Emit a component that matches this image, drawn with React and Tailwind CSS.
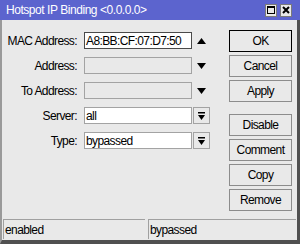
import React from 'react';

const font = { fontFamily: '"Liberation Sans", Arial, sans-serif' };

// small arrow drawings used beside the fields
const ArrowUp = () => (
  <svg width="9" height="6" viewBox="0 0 9 6"><path d="M0 6 L4.5 0 L9 6 Z" fill="#000" /></svg>
);

const ArrowDown = () => (
  <svg width="9" height="6" viewBox="0 0 9 6"><path d="M0 0 L9 0 L4.5 6 Z" fill="#000" /></svg>
);

const DropIcon = () => (
  <svg width="7" height="8" viewBox="0 0 7 8">
    <rect x="0" y="0" width="7" height="1.5" fill="#000" />
    <path d="M0 3 L7 3 L3.5 8 Z" fill="#000" />
  </svg>
);

const txt = 'text-[12px] leading-none tracking-[-0.6px] whitespace-nowrap text-black';

const Row = ({ label, children }) => (
  <div className="flex items-center h-[17px]">
    <div className={`w-[76px] text-right pr-[1px] ${txt}`}>{label}</div>
    <div className="ml-[6px] flex items-center">{children}</div>
  </div>
);

const Field = ({ value, variant = 'white' }) => {
  const styles = {
    active: 'bg-white border-[#4a4a4a]',
    white: 'bg-white border-[#a3a3a3]',
    disabled: 'bg-[#e9e9e9] border-[#a3a3a3]',
  };
  return (
    <div className={`w-[108px] h-[17px] border ${styles[variant]} flex items-center pl-[1px] overflow-hidden ${txt}`}>
      {value}
    </div>
  );
};

const Btn = ({ children, primary = false }) => (
  <div
    className={`w-[63px] h-[22px] flex items-center justify-center border bg-[#e9e9e9] ${txt} ${
      primary ? 'border-black' : 'border-[#8c8c8c]'
    }`}
  >
    {children}
  </div>
);

export default function App() {
  return (
    <div style={font} className="w-[300px] h-[244px] flex flex-col bg-[#5c64ce] overflow-hidden">
      {/* title bar */}
      <div className="h-[20px] flex items-center pl-[6px] pr-[8px]">
        <span className="text-white text-[12px] leading-none tracking-[-0.45px] whitespace-nowrap">Hotspot IP Binding &lt;0.0.0.0&gt;</span>
        <div className="ml-auto flex gap-[3px]">
          <div className="w-[12px] h-[13px] bg-[#e9e9e9] border border-[#7a7a7a] flex items-center justify-center">
            <div className="w-[8px] h-[8px] border border-black border-t-2" />
          </div>
          <div className="w-[12px] h-[13px] bg-[#e9e9e9] border border-[#7a7a7a] flex items-center justify-center">
            <svg width="8" height="8" viewBox="0 0 8 8">
              <path d="M1 1 L7 7 M7 1 L1 7" stroke="#000" strokeWidth="2" />
            </svg>
          </div>
        </div>
      </div>

      {/* body */}
      <div className="flex-1 flex flex-col bg-[#e9e9e9] border-l-2 border-l-[#9a9a9a] border-r-[3px] border-r-[#505050] border-b-[4px] border-b-[#505050]">
        <div className="flex flex-1">
          <div className="flex flex-col gap-[8px] pt-[12px]">
            <Row label="MAC Address:">
              <Field value="A8:BB:CF:07:D7:50" variant="active" />
              <div className="w-[17px] ml-[1px] flex justify-center"><ArrowUp /></div>
            </Row>
            <Row label="Address:">
              <Field value="" variant="disabled" />
              <div className="w-[17px] ml-[1px] flex justify-center"><ArrowDown /></div>
            </Row>
            <Row label="To Address:">
              <Field value="" variant="disabled" />
              <div className="w-[17px] ml-[1px] flex justify-center"><ArrowDown /></div>
            </Row>
            <Row label="Server:">
              <Field value="all" />
              <div className="w-[17px] h-[17px] ml-[1px] border border-[#a3a3a3] flex items-center justify-center"><DropIcon /></div>
            </Row>
            <Row label="Type:">
              <Field value="bypassed" />
              <div className="w-[17px] h-[17px] ml-[1px] border border-[#a3a3a3] flex items-center justify-center"><DropIcon /></div>
            </Row>
          </div>

          <div className="ml-auto mr-[5px] pt-[10px] flex flex-col gap-[3px]">
            <Btn primary>OK</Btn>
            <Btn>Cancel</Btn>
            <Btn>Apply</Btn>
            <div className="h-[6px]" />
            <Btn>Disable</Btn>
            <Btn>Comment</Btn>
            <Btn>Copy</Btn>
            <Btn>Remove</Btn>
          </div>
        </div>

        {/* status bar */}
        <div className="flex gap-[3px] px-[1px] pb-[1px]">
          <div className={`w-[142px] h-[20px] border-t border-l border-t-[#a0a0a0] border-l-[#a0a0a0] flex items-center pl-[1px] ${txt}`}>enabled</div>
          <div className={`flex-1 h-[20px] border-t border-l border-t-[#a0a0a0] border-l-[#a0a0a0] flex items-center pl-[1px] ${txt}`}>bypassed</div>
        </div>
      </div>
    </div>
  );
}
